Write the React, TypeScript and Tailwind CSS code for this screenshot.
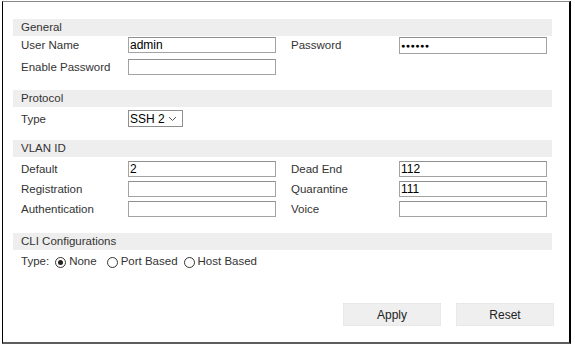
import React from "react";

const Label = ({ children }: { children: React.ReactNode }) => (
  <div className="w-[115px] shrink-0 pl-[8px] text-[11.5px] leading-[14px] text-[#333]">{children}</div>
);

const RLabel = ({ children }: { children: React.ReactNode }) => (
  <div className="ml-[15px] w-[108px] shrink-0 text-[11.5px] leading-[14px] text-[#333]">{children}</div>
);

const Input = ({ value = "" }: { value?: string }) => (
  <div className="h-[16px] w-[148px] shrink-0 border border-[#a3a3a3] border-t-[#8f8f8f] bg-white pl-[1px] text-[12px] leading-[14px] text-black">
    {value}
  </div>
);

const Band = ({ children }: { children: React.ReactNode }) => (
  <div className="flex h-[17px] w-[539px] shrink-0 items-center bg-[#eeeeee] pl-[8px] text-[11.5px] text-[#333]">
    {children}
  </div>
);

const Radio = ({ checked }: { checked?: boolean }) => (
  <span className="mr-[3px] flex h-[11px] w-[11px] items-center justify-center rounded-full border border-[#333] bg-white">
    {checked && <span className="h-[5px] w-[5px] rounded-full bg-[#222]" />}
  </span>
);

export default function App() {
  return (
    <div
      className="bg-white"
      style={{ width: 575, height: 349, fontFamily: '"Liberation Sans", Arial, sans-serif' }}
    >
      <div className="ml-[2px] mt-[1px] flex h-[343px] w-[569px] flex-col border-t border-l border-r-2 border-b-2 border-t-[#8a8a8a] border-l-black border-r-black border-b-[#5b5e5b] pl-[10px] pt-[17px]">
        {/* General */}
        <Band>General</Band>
        <div className="mt-[1px] flex h-[16px] items-center">
          <Label>User Name</Label>
          <Input value="admin" />
          <RLabel>Password</RLabel>
          <div className="flex h-[17px] w-[148px] items-center border border-[#a3a3a3] border-t-[#8f8f8f] pl-[1px] text-[7px] leading-none tracking-[0.5px] text-black">
            ●●●●●●
          </div>
        </div>
        <div className="mt-[6px] flex h-[16px] items-center">
          <Label>Enable Password</Label>
          <Input />
        </div>

        {/* Protocol */}
        <div className="mt-[15px]">
          <Band>Protocol</Band>
        </div>
        <div className="mt-[3px] flex h-[17px] items-center">
          <Label>Type</Label>
          <div className="flex h-[17px] w-[55px] items-center border border-[#8f8f8f] pl-[1px] text-[12px] text-black">
            <span>SSH 2</span>
            <svg width="9" height="6" viewBox="0 0 9 6" className="ml-[3px]">
              <path d="M1 1 L4.5 4.5 L8 1" fill="none" stroke="#555" strokeWidth="1" />
            </svg>
          </div>
        </div>

        {/* VLAN ID */}
        <div className="mt-[13px]">
          <Band>VLAN ID</Band>
        </div>
        <div className="mt-[4px] flex h-[16px] items-center">
          <Label>Default</Label>
          <Input value="2" />
          <RLabel>Dead End</RLabel>
          <Input value="112" />
        </div>
        <div className="mt-[4px] flex h-[16px] items-center">
          <Label>Registration</Label>
          <Input />
          <RLabel>Quarantine</RLabel>
          <Input value="111" />
        </div>
        <div className="mt-[4px] flex h-[16px] items-center">
          <Label>Authentication</Label>
          <Input />
          <RLabel>Voice</RLabel>
          <Input />
        </div>

        {/* CLI */}
        <div className="mt-[16px]">
          <Band>CLI Configurations</Band>
        </div>
        <div className="flex h-[24px] items-center pl-[8px] text-[11.5px] text-[#333]">
          <span className="mr-[6px]">Type:</span>
          <Radio checked />
          <span className="mr-[10px]">None</span>
          <Radio />
          <span className="mr-[6px]">Port Based</span>
          <Radio />
          <span>Host Based</span>
        </div>

        <div className="mt-[29px] flex w-[541px] justify-end gap-[15px]">
          <button className="h-[23px] w-[98px] border border-dotted border-[#e2e2e2] bg-[#efefef] text-[12px] text-[#222]">
            Apply
          </button>
          <button className="h-[23px] w-[98px] border border-dotted border-[#e2e2e2] bg-[#efefef] text-[12px] text-[#222]">
            Reset
          </button>
        </div>
      </div>
    </div>
  );
}
